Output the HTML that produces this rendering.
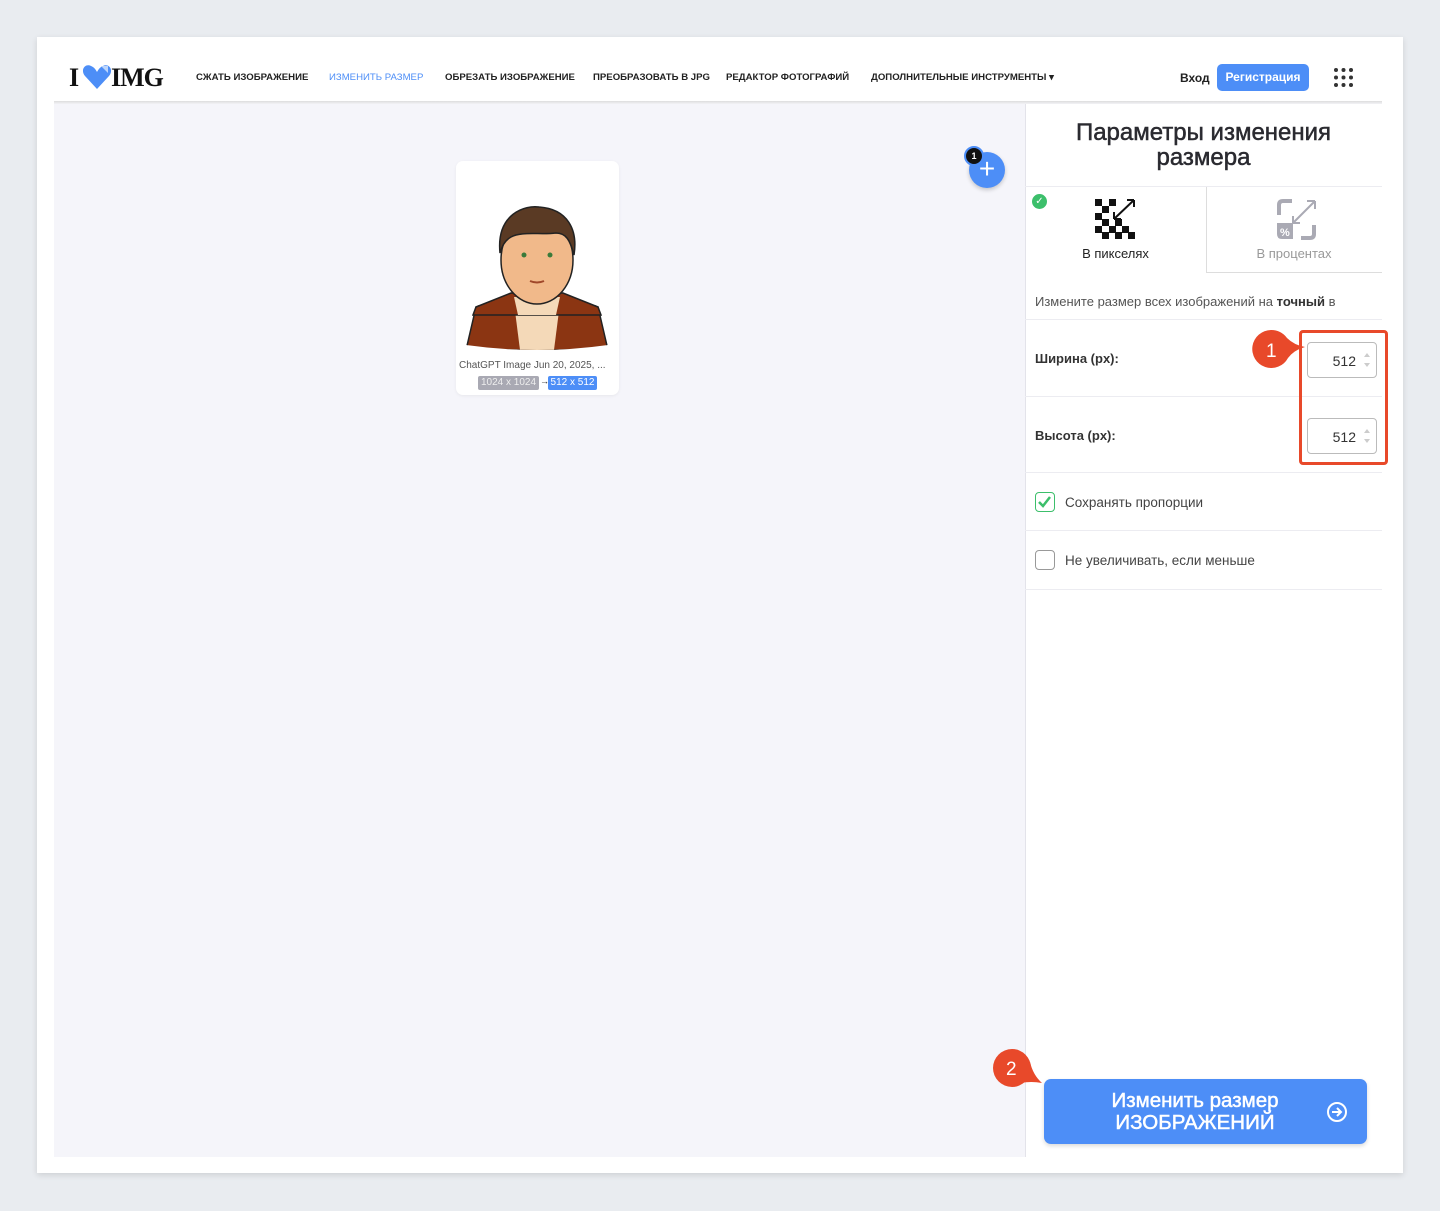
<!DOCTYPE html>
<html><head><meta charset="utf-8">
<style>
*{box-sizing:border-box;margin:0;padding:0}
body{width:1440px;height:1211px;background:#e9ecf0;font-family:"Liberation Sans",sans-serif;position:relative;overflow:hidden;color:#222}
.abs{position:absolute}
.frame{left:37px;top:37px;width:1366px;height:1136px;background:#fff;box-shadow:0 2px 6px rgba(0,0,0,.12)}
.nav a{position:absolute;top:72px;font-size:9.6px;font-weight:bold;color:#222;text-decoration:none;white-space:nowrap}
.hdrline{left:54px;top:101px;width:1328px;height:3px;background:linear-gradient(#ddd,#f3f3f6)}
.main{left:54px;top:104px;width:971px;height:1053px;background:#f5f5fa}
.side{left:1025px;top:104px;width:357px;height:1053px;background:#fff;border-left:1px solid #e3e3ea}
.sep{position:absolute;left:1025px;width:357px;height:1px;background:#ececf1}
.inp{position:absolute;width:70px;height:36px;border:1px solid #bbb;border-radius:4px;font-size:14px;text-align:right;padding:10px 20px 0 0;color:#333}
.inp:after{content:"";position:absolute;right:6px;top:10px;width:0;height:0;border-left:3px solid transparent;border-right:3px solid transparent;border-bottom:4px solid #ccc}
.inp:before{content:"";position:absolute;right:6px;top:20px;width:0;height:0;border-left:3px solid transparent;border-right:3px solid transparent;border-top:4px solid #ccc}
.lbl{position:absolute;font-size:13px;font-weight:bold;color:#333}
.cb{position:absolute;left:1035px;width:20px;height:20px;border:1.5px solid #999;border-radius:4px;background:#fff}
.cbt{position:absolute;left:1065px;font-size:13.5px;color:#444}
</style></head><body>
<div class="abs frame"></div>
<div class="abs" style="left:69px;top:63px;font-family:'Liberation Serif',serif;font-weight:bold;font-size:26px;letter-spacing:-1px;color:#111">I</div>
<svg class="abs" style="left:82px;top:64px" width="30" height="26" viewBox="0 0 30 26"><path d="M15 25 L3 12 C-2 6 3 -1 9 2 C12 3 14 6 15 8 C16 6 18 3 21 2 C27 -1 32 6 27 12 Z" fill="#4d8ef7"/><path d="M19 2 L26 2 L26 9 Z" fill="#bcd5fb"/></svg>
<div class="abs" style="left:111px;top:63px;font-family:'Liberation Serif',serif;font-weight:bold;font-size:26px;letter-spacing:-1px;color:#111">IMG</div>
<div class="nav">
<a style="left:196px">СЖАТЬ ИЗОБРАЖЕНИЕ</a>
<a style="left:329px;color:#4d8ef7;font-weight:normal">ИЗМЕНИТЬ РАЗМЕР</a>
<a style="left:445px">ОБРЕЗАТЬ ИЗОБРАЖЕНИЕ</a>
<a style="left:593px">ПРЕОБРАЗОВАТЬ В JPG</a>
<a style="left:726px">РЕДАКТОР ФОТОГРАФИЙ</a>
<a style="left:871px">ДОПОЛНИТЕЛЬНЫЕ ИНСТРУМЕНТЫ ▾</a>
</div>
<div class="abs" style="left:1180px;top:71px;font-size:12px;font-weight:bold;color:#222">Вход</div>
<div class="abs" style="left:1217px;top:64px;width:92px;height:27px;background:#4d8ef7;border-radius:5px;color:#fff;font-size:12px;font-weight:bold;text-align:center;line-height:27px">Регистрация</div>
<svg class="abs" style="left:1333px;top:67px" width="21" height="21"><g fill="#333"><circle cx="3" cy="3" r="2"/><circle cx="10.5" cy="3" r="2"/><circle cx="18" cy="3" r="2"/><circle cx="3" cy="10.5" r="2"/><circle cx="10.5" cy="10.5" r="2"/><circle cx="18" cy="10.5" r="2"/><circle cx="3" cy="18" r="2"/><circle cx="10.5" cy="18" r="2"/><circle cx="18" cy="18" r="2"/></g></svg>
<div class="abs hdrline"></div>
<div class="abs main"></div>
<div class="abs" style="left:456px;top:161px;width:163px;height:234px;background:#fff;border-radius:7px;box-shadow:0 1px 3px rgba(0,0,0,.06)"></div>
<svg class="abs" style="left:466px;top:205px" width="142" height="145" viewBox="0 0 142 145">
<defs><clipPath id="c"><path d="M0 140 L0 100 L142 100 L142 140 Q71 150 0 140Z"/></clipPath></defs>
<g clip-path="url(#c)"><path d="M0 145 L10 102 L45 88 L97 88 L132 102 L142 145Z" fill="#8b3512" stroke="#222" stroke-width="1.5"/><path d="M48 98 L94 98 L88 145 L54 145Z" fill="#f4d9b8"/></g>
<path d="M10 102 L45 88 L97 88 L132 102 L135 110 L7 110Z" fill="#8b3512" stroke="#222" stroke-width="1.5"/>
<path d="M48 92 L94 92 L90 110 L52 110Z" fill="#f4d9b8"/>
<ellipse cx="71" cy="55" rx="36" ry="44" fill="#f1b98a" stroke="#222" stroke-width="1.5"/>
<path d="M34 48 C30 8 60 0 73 2 C102 4 112 25 108 50 C104 35 100 28 90 28 C75 30 55 26 45 32 C38 36 36 42 34 48Z" fill="#5a3a24" stroke="#222" stroke-width="1.5"/>
<circle cx="58" cy="50" r="2.5" fill="#3a7a3a"/><circle cx="84" cy="50" r="2.5" fill="#3a7a3a"/>
<path d="M64 76 Q71 79 78 76" stroke="#a0482a" stroke-width="2" fill="none"/>
</svg>
<div class="abs" style="left:459px;top:360px;font-size:10px;color:#555;white-space:nowrap">ChatGPT Image Jun 20, 2025, ...</div>
<div class="abs" style="left:478px;top:376px;width:61px;height:14px;background:#a9a9b3;border-radius:2px;color:#eee;font-size:10px;text-align:center;line-height:14px">1024 x 1024</div>
<div class="abs" style="left:540px;top:376px;font-size:9px">→</div>
<div class="abs" style="left:548px;top:376px;width:49px;height:14px;background:#4d8ef7;border-radius:2px;color:#fff;font-size:10px;text-align:center;line-height:14px">512 x 512</div>
<div class="abs" style="left:969px;top:152px;width:36px;height:36px;border-radius:50%;background:#4d8ef7;box-shadow:0 2px 4px rgba(0,0,0,.2);color:#fff;font-size:28px;line-height:34px;text-align:center;font-weight:300">+</div>
<div class="abs" style="left:964px;top:146px;width:20px;height:20px;border-radius:50%;background:#111;border:2px solid #4d8ef7;color:#fff;font-size:9px;font-weight:bold;text-align:center;line-height:16px">1</div>
<div class="abs side"></div>
<div class="abs" style="left:1025px;top:120px;width:357px;text-align:center;font-size:24px;line-height:25px;color:#2a2a30;-webkit-text-stroke:0.5px #2a2a30">Параметры изменения<br>размера</div>
<div class="sep" style="top:186px"></div>
<div class="abs" style="left:1206px;top:187px;width:176px;height:86px;background:#fff;border-left:1px solid #ddd;border-bottom:1px solid #ddd"></div>
<div class="abs" style="left:1032px;top:194px;width:15px;height:15px;border-radius:50%;background:#3cbf6b;color:#fff;font-size:10px;text-align:center;line-height:15px">✓</div>
<svg class="abs" style="left:1095px;top:199px" width="40" height="40" viewBox="0 0 40 40"><g fill="#111"><rect x="0" y="0" width="7" height="7"/><rect x="14" y="0" width="7" height="7"/><rect x="7" y="7" width="7" height="7"/><rect x="0" y="14" width="7" height="7"/><rect x="7" y="20" width="7" height="7"/><rect x="0" y="27" width="7" height="7"/><rect x="20" y="20" width="7" height="7"/><rect x="14" y="27" width="7" height="7"/><rect x="27" y="27" width="7" height="7"/><rect x="7" y="33" width="7" height="7"/><rect x="20" y="33" width="7" height="7"/><rect x="33" y="33" width="7" height="7"/></g><path d="M19 20 L39 1 M19 20 L19 13 M19 20 L26 20 M39 1 L32 1 M39 1 L39 8" stroke="#111" stroke-width="2" fill="none"/></svg>
<div class="abs" style="left:1025px;top:246px;width:181px;text-align:center;font-size:13px;color:#222">В пикселях</div>
<svg class="abs" style="left:1276px;top:199px" width="41" height="41" viewBox="0 0 41 41"><path d="M3 16 V6 Q3 2 7 2 H16 M25 39 H34 Q38 39 38 35 V26" stroke="#aaaab4" stroke-width="4" fill="none"/><path d="M1 24 H17 V40 H6 Q1 40 1 35Z" fill="#aaaab4"/><text x="4" y="37" font-size="11" fill="#fff" font-family="Liberation Sans" font-weight="bold">%</text><path d="M17 24 L39 2 M39 2 L31 2 M39 2 L39 10 M17 24 L17 17 M17 24 L24 24" stroke="#aaaab4" stroke-width="2" fill="none"/></svg>
<div class="abs" style="left:1206px;top:246px;width:176px;text-align:center;font-size:13px;color:#999">В процентах</div>
<div class="abs" style="left:1035px;top:294px;font-size:13px;color:#555;white-space:nowrap">Измените размер всех изображений на <b style="color:#333">точный</b> в</div>
<div class="sep" style="top:319px"></div>
<div class="lbl" style="left:1035px;top:351px">Ширина (px):</div>
<div class="inp" style="left:1307px;top:342px">512</div>
<div class="sep" style="top:396px"></div>
<div class="lbl" style="left:1035px;top:428px">Высота (px):</div>
<div class="inp" style="left:1307px;top:418px">512</div>
<div class="sep" style="top:472px"></div>
<div class="abs" style="left:1299px;top:330px;width:89px;height:135px;border:3px solid #e8492a;border-radius:4px"></div>
<svg class="abs" style="left:1250px;top:328px" width="56" height="44"><path d="M21 2 A19 19 0 1 0 38 30 Q44 22 55 19 Q44 17 37 10 A19 19 0 0 0 21 2Z" fill="#e8492a"/><text x="16" y="29" font-size="19" fill="#fff" font-family="Liberation Sans">1</text></svg>
<div class="cb" style="top:492px;border-color:#3cbf6b"><svg width="17" height="17" viewBox="0 0 17 17"><path d="M3 9 L7 13 L14 4" stroke="#3cbf6b" stroke-width="2.5" fill="none"/></svg></div>
<div class="cbt" style="top:495px">Сохранять пропорции</div>
<div class="sep" style="top:530px"></div>
<div class="cb" style="top:550px"></div>
<div class="cbt" style="top:553px">Не увеличивать, если меньше</div>
<div class="sep" style="top:589px"></div>
<svg class="abs" style="left:991px;top:1047px" width="52" height="42"><circle cx="21" cy="21" r="19" fill="#e8492a"/><path d="M30 36 Q40 34 51 36 Q42 28 39 15Z" fill="#e8492a"/><text x="15" y="28" font-size="19" fill="#fff" font-family="Liberation Sans">2</text></svg>
<div class="abs" style="left:1044px;top:1079px;width:323px;height:65px;background:#4d8ef7;border-radius:7px;box-shadow:0 2px 4px rgba(0,0,0,.15)"></div>
<div class="abs" style="left:1060px;top:1090px;width:270px;text-align:center;color:#fff;font-size:20.5px;line-height:22px;-webkit-text-stroke:0.5px #fff">Изменить размер<br>ИЗОБРАЖЕНИЙ</div>
<svg class="abs" style="left:1326px;top:1101px" width="22" height="22"><circle cx="11" cy="11" r="9" stroke="#fff" stroke-width="2" fill="none"/><path d="M6 11 H14 M11 7 L15 11 L11 15" stroke="#fff" stroke-width="2" fill="none"/></svg>
</body></html>
